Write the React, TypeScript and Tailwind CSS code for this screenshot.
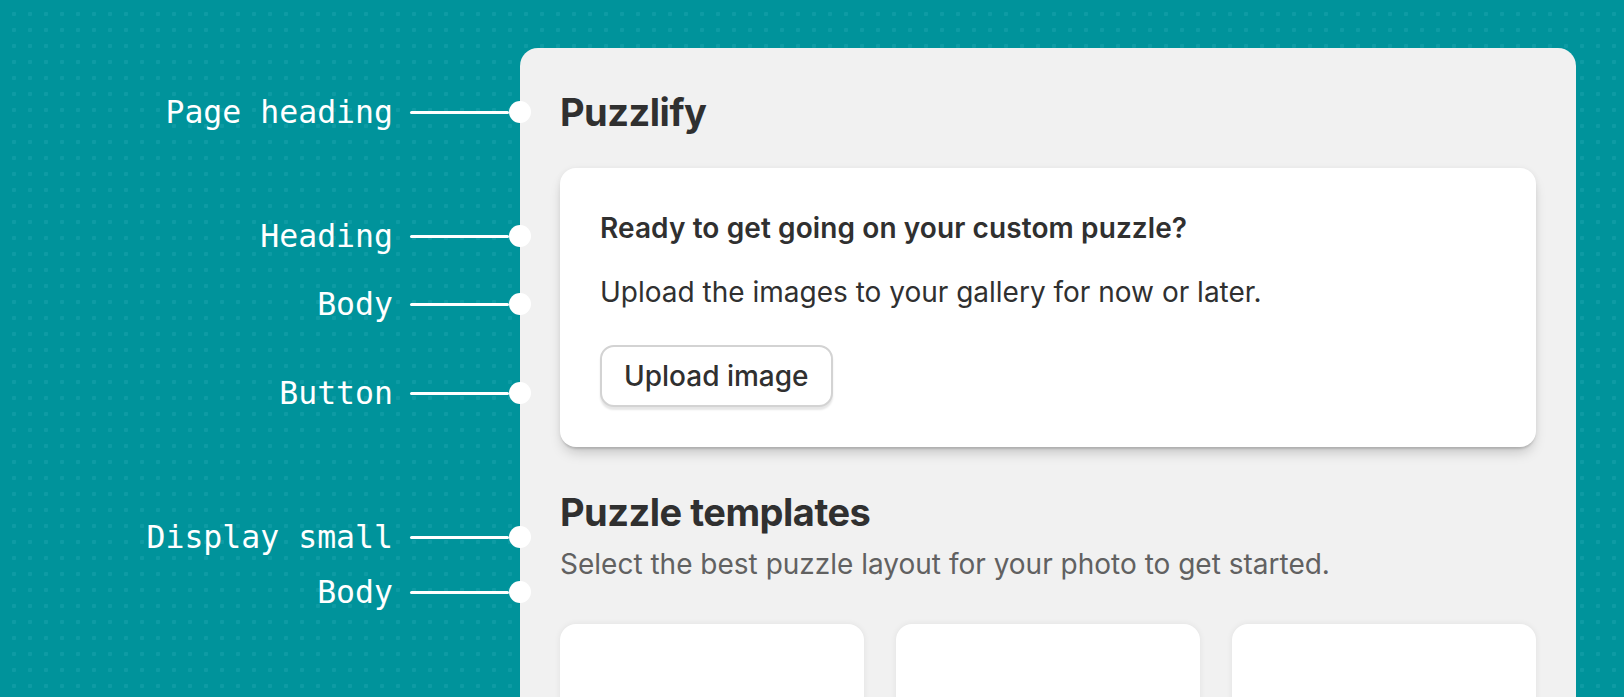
const labels = [
  { text: "Page heading", mt: "mt-[92px]" },
  { text: "Heading", mt: "mt-[84px]" },
  { text: "Body", mt: "mt-[28px]" },
  { text: "Button", mt: "mt-[49px]" },
  { text: "Display small", mt: "mt-[104px]" },
  { text: "Body", mt: "mt-[15px]" },
];

function Callout({ text, mt }: { text: string; mt: string }) {
  return (
    <div className={`${mt} flex h-[40px] items-center justify-end -mr-[11px]`}>
      <span className="font-['DejaVu_Sans_Mono',monospace] text-[31.5px] leading-[40px] text-white">
        {text}
      </span>
      <span className="ml-[17px] h-[3px] w-[99px] rounded-full bg-white" />
      <span className="h-[22px] w-[22px] rounded-full bg-white" />
    </div>
  );
}

export default function App() {
  return (
    <div className="flex h-[697px] w-[1624px] overflow-hidden bg-[#00939b] bg-[radial-gradient(circle,#0e9ba4_2px,transparent_2.5px)] bg-[length:16px_16px] bg-[position:6px_6px] font-['Inter',sans-serif] text-[#303030]">
      <div className="relative z-10 flex w-[520px] shrink-0 flex-col">
        {labels.map((l, i) => (
          <Callout key={i} text={l.text} mt={l.mt} />
        ))}
      </div>

      <div className="mt-[48px] w-[1056px] shrink-0 rounded-t-[18px] bg-[#f1f1f1] px-[40px] pt-[40px]">
        <h1 className="text-[38px] font-bold leading-[48px] tracking-[-0.5px]">Puzzlify</h1>

        <div className="mt-[32px] rounded-[16px] bg-white p-[40px] shadow-[0_3px_2px_-1px_rgba(0,0,0,0.12),0_8px_14px_-4px_rgba(0,0,0,0.22),0_0_6px_rgba(0,0,0,0.05)]">
          <h2 className="text-[28px] font-semibold leading-[40px] tracking-[0.1px]">
            Ready to get going on your custom puzzle?
          </h2>
          <p className="mt-[24px] text-[28px] leading-[40px]">
            Upload the images to your gallery for now or later.
          </p>
          <button className="mt-[33px] h-[62px] rounded-[14px] border-2 border-[#d3d3d3] bg-white px-[22px] text-[28px] font-medium shadow-[0_3px_2px_rgba(0,0,0,0.1)]">
            Upload image
          </button>
        </div>

        <h2 className="mt-[41px] text-[38px] font-bold leading-[48px] tracking-[-0.5px]">
          Puzzle templates
        </h2>
        <p className="mt-[8px] text-[28px] leading-[40px] text-[#616161]">
          Select the best puzzle layout for your photo to get started.
        </p>

        <div className="mt-[40px] grid grid-cols-3 gap-[32px]">
          <div className="h-[220px] rounded-[16px] bg-white shadow-[0_0_6px_rgba(0,0,0,0.07)]" />
          <div className="h-[220px] rounded-[16px] bg-white shadow-[0_0_6px_rgba(0,0,0,0.07)]" />
          <div className="h-[220px] rounded-[16px] bg-white shadow-[0_0_6px_rgba(0,0,0,0.07)]" />
        </div>
      </div>
    </div>
  );
}
